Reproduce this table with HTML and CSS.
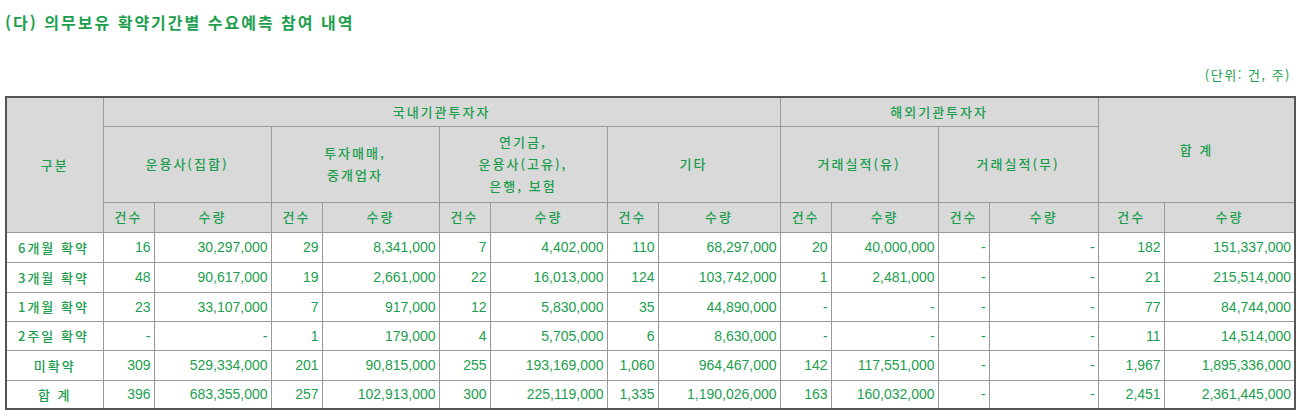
FILE: index.html
```html
<!DOCTYPE html>
<html lang="ko">
<head>
<meta charset="utf-8">
<link rel="stylesheet" href="styles.css">
</head>
<body>
<div class="page">
  <h1 class="title">(다) 의무보유 확약기간별 수요예측 참여 내역</h1>
  <div class="unit">(단위: 건, 주)</div>
  <table class="grid">
    <colgroup>
      <col style="width:97px"><col style="width:51px"><col style="width:117px"><col style="width:51px"><col style="width:117px"><col style="width:51px"><col style="width:117px"><col style="width:51px"><col style="width:122px"><col style="width:51px"><col style="width:107px"><col style="width:51px"><col style="width:109px"><col style="width:66px"><col style="width:131px">
    </colgroup>
    <thead>
      <tr class="h1">
        <th rowspan="3">구분</th>
        <th colspan="8">국내기관투자자</th>
        <th colspan="4">해외기관투자자</th>
        <th colspan="2" rowspan="2">합 계</th>
      </tr>
      <tr class="h2">
        <th colspan="2">운용사(집합)</th>
        <th colspan="2">투자매매,<br>중개업자</th>
        <th colspan="2">연기금,<br>운용사(고유),<br>은행, 보험</th>
        <th colspan="2">기타</th>
        <th colspan="2">거래실적(유)</th>
        <th colspan="2">거래실적(무)</th>
      </tr>
      <tr class="h3">
        <th>건수</th><th>수량</th><th>건수</th><th>수량</th><th>건수</th><th>수량</th><th>건수</th><th>수량</th><th>건수</th><th>수량</th><th>건수</th><th>수량</th><th>건수</th><th>수량</th>
      </tr>
    </thead>
    <tbody>
      <tr class="r30"><th>6개월 확약</th><td>16</td><td>30,297,000</td><td>29</td><td>8,341,000</td><td>7</td><td>4,402,000</td><td>110</td><td>68,297,000</td><td>20</td><td>40,000,000</td><td>-</td><td>-</td><td>182</td><td>151,337,000</td></tr>
      <tr class="r30"><th>3개월 확약</th><td>48</td><td>90,617,000</td><td>19</td><td>2,661,000</td><td>22</td><td>16,013,000</td><td>124</td><td>103,742,000</td><td>1</td><td>2,481,000</td><td>-</td><td>-</td><td>21</td><td>215,514,000</td></tr>
      <tr class="r29"><th>1개월 확약</th><td>23</td><td>33,107,000</td><td>7</td><td>917,000</td><td>12</td><td>5,830,000</td><td>35</td><td>44,890,000</td><td>-</td><td>-</td><td>-</td><td>-</td><td>77</td><td>84,744,000</td></tr>
      <tr class="r29"><th>2주일 확약</th><td>-</td><td>-</td><td>1</td><td>179,000</td><td>4</td><td>5,705,000</td><td>6</td><td>8,630,000</td><td>-</td><td>-</td><td>-</td><td>-</td><td>11</td><td>14,514,000</td></tr>
      <tr class="r30"><th class="ctr">미확약</th><td>309</td><td>529,334,000</td><td>201</td><td>90,815,000</td><td>255</td><td>193,169,000</td><td>1,060</td><td>964,467,000</td><td>142</td><td>117,551,000</td><td>-</td><td>-</td><td>1,967</td><td>1,895,336,000</td></tr>
      <tr class="r29"><th class="ctr">합 계</th><td>396</td><td>683,355,000</td><td>257</td><td>102,913,000</td><td>300</td><td>225,119,000</td><td>1,335</td><td>1,190,026,000</td><td>163</td><td>160,032,000</td><td>-</td><td>-</td><td>2,451</td><td>2,361,445,000</td></tr>
    </tbody>
  </table>
</div>
</body>
</html>
```

FILE: styles.css
```css
html, body {
  margin: 0;
  padding: 0;
  background: #ffffff;
}
.page {
  padding: 0 6px 0 5px;
  color: #1c9e4e;
  font-family: "Liberation Sans", "Noto Sans CJK KR", sans-serif;
}
.title {
  margin: 0;
  padding-top: 11px;
  height: 22px;
  font-family: "Noto Sans CJK KR", sans-serif;
  font-size: 16px;
  font-weight: 700;
  line-height: 22px;
  letter-spacing: 2px;
  color: #1c9e4e;
}
.unit {
  margin-top: 33px;
  height: 30px;
  line-height: 18px;
  text-align: right;
  padding-right: 3px;
  font-family: "Noto Sans CJK KR", sans-serif;
  font-size: 13px;
  letter-spacing: 1.5px;
}
.grid {
  border-collapse: collapse;
  table-layout: fixed;
  width: 1289px;
  border: 2px solid #555555;
  font-size: 14px;
}
.grid th, .grid td {
  border: 1px solid #9a9a9a;
  padding: 0 4px;
  white-space: nowrap;
  overflow: hidden;
}
.grid thead th {
  background: #d9d9d9;
  font-family: "Noto Sans CJK KR", sans-serif;
  font-weight: 500;
  font-size: 13px;
  text-align: center;
  line-height: 22px;
  letter-spacing: 2px;
}
.h1 { height: 29px; }
.h2 { height: 76px; }
.h3 { height: 30px; }
.grid tbody th {
  font-family: "Noto Sans CJK KR", sans-serif;
  font-weight: 500;
  font-size: 13px;
  text-align: left;
  padding-left: 11px;
  letter-spacing: 2px;
}
.grid tbody th.ctr {
  text-align: center;
  padding-left: 4px;
}
.grid tbody td {
  text-align: right;
  padding-right: 3px;
}
.r30 { height: 30px; }
.r29 { height: 29px; }
```
